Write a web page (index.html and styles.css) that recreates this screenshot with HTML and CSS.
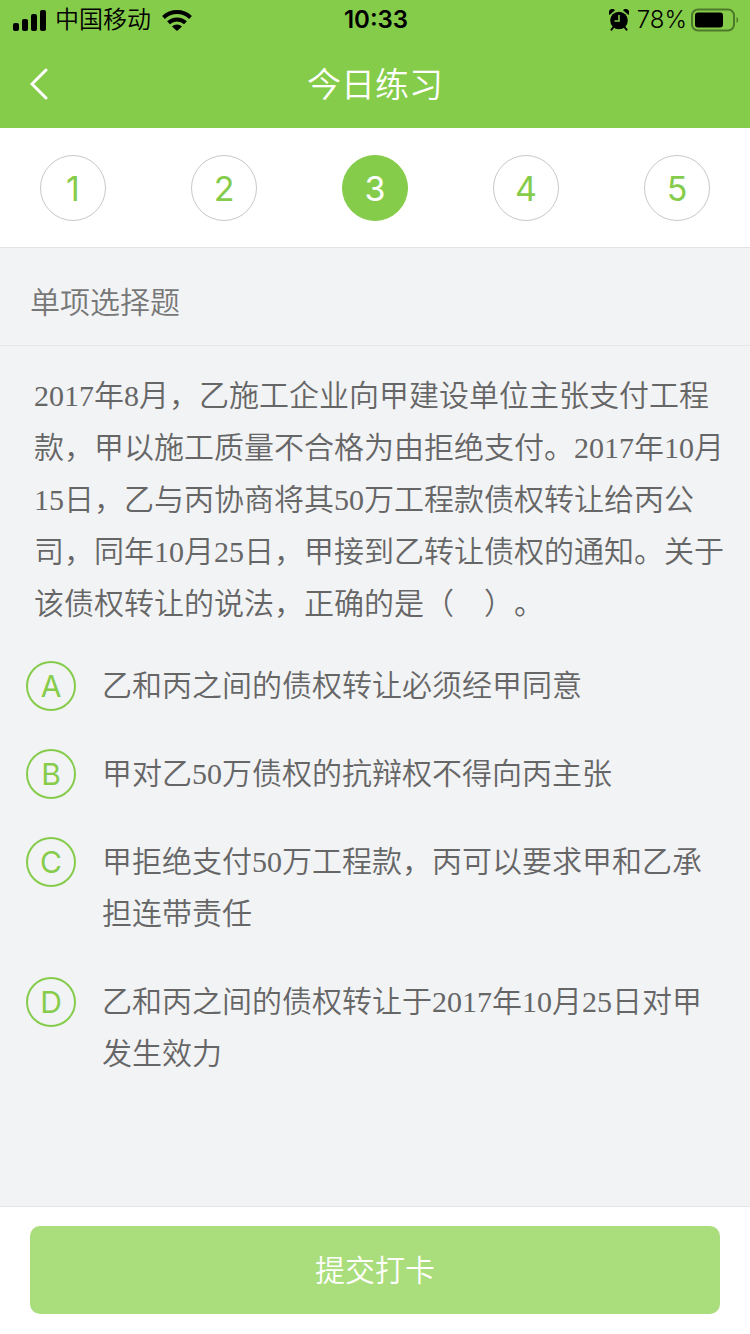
FILE: index.html
```
<!DOCTYPE html>
<html lang="zh-CN">
<head>
    <meta charset="UTF-8">
    <meta name="viewport" content="width=device-width, initial-scale=1">
    <title>今日练习</title>
    <link rel="stylesheet" href="styles.css">
</head>
<body>
    <header class="header">
        <div class="status-bar">
            <div class="status-left">
                <svg width="34" height="22" viewBox="0 0 34 22">
                    <rect x="0" y="14" width="6" height="8" rx="2"/>
                    <rect x="9" y="10" width="6" height="12" rx="2"/>
                    <rect x="18" y="5" width="6" height="17" rx="2"/>
                    <rect x="27" y="1" width="6" height="21" rx="2"/>
                </svg>
                <span>中国移动</span>
                <svg class="wifi" width="30" height="22" viewBox="0 0 30 22">
                    <g fill="none" stroke="#000" stroke-width="4">
                        <path d="M1.5 8.5a19.5 19.5 0 0 1 27 0"/>
                        <path d="M6.5 13.8a12.3 12.3 0 0 1 17 0"/>
                    </g>
                    <path d="M10 17.6a7.2 7.2 0 0 1 10 0L15 22z"/>
                </svg>
            </div>
            <span class="time">10:33</span>
            <div class="status-right">
                <svg width="20" height="22" viewBox="0 0 20 22">
                    <circle cx="10" cy="11.5" r="8.8"/>
                    <path d="M0.5 6A3.6 3.6 0 0 1 6 1.3zM19.5 6A3.6 3.6 0 0 0 14 1.3z"/>
                    <path d="M4.5 18l-2 2.6M15.5 18l2 2.6" stroke="#000" stroke-width="2" stroke-linecap="round"/>
                    <path d="M10 6v6H5.5" fill="none" stroke="#86cc4b" stroke-width="1.6"/>
                </svg>
                <span>78%</span>
                <svg class="battery" width="48" height="24" viewBox="0 0 48 24">
                    <rect x="1" y="1.5" width="42" height="21" rx="6" fill="none" stroke="#4d7a28" stroke-width="2"/>
                    <rect x="4" y="4.5" width="28" height="15" rx="3"/>
                    <path d="M45.5 9v6c2.2-1 2.2-5 0-6z" fill="#4d7a28"/>
                </svg>
            </div>
        </div>
        <div class="nav">
            <button class="back" type="button" aria-label="返回">
                <svg width="18" height="32" viewBox="0 0 18 32">
                    <path d="M16 2L2 16l14 14" fill="none" stroke="#fff" stroke-width="3" stroke-linecap="round"/>
                </svg>
            </button>
            <h1>今日练习</h1>
        </div>
    </header>

    <nav class="steps">
        <button class="step" type="button">1</button>
        <button class="step" type="button">2</button>
        <button class="step active" type="button">3</button>
        <button class="step" type="button">4</button>
        <button class="step" type="button">5</button>
    </nav>

    <main class="content">
        <h2 class="type">单项选择题</h2>
        <p class="question" id="question">2017年8月，乙施工企业向甲建设单位主张支付工程款，甲以施工质量不合格为由拒绝支付。2017年10月15日，乙与丙协商将其50万工程款债权转让给丙公司，同年10月25日，甲接到乙转让债权的通知。关于该债权转让的说法，正确的是（　）。</p>
        <div class="options" role="radiogroup" aria-labelledby="question">
            <label class="option">
                <input type="radio" name="answer" value="A">
                <span class="letter">A</span>
                <span class="text">乙和丙之间的债权转让必须经甲同意</span>
            </label>
            <label class="option">
                <input type="radio" name="answer" value="B">
                <span class="letter">B</span>
                <span class="text">甲对乙50万债权的抗辩权不得向丙主张</span>
            </label>
            <label class="option">
                <input type="radio" name="answer" value="C">
                <span class="letter">C</span>
                <span class="text">甲拒绝支付50万工程款，丙可以要求甲和乙承担连带责任</span>
            </label>
            <label class="option">
                <input type="radio" name="answer" value="D">
                <span class="letter">D</span>
                <span class="text">乙和丙之间的债权转让于2017年10月25日对甲发生效力</span>
            </label>
        </div>
    </main>

    <footer class="footer">
        <button class="submit" type="button">提交打卡</button>
    </footer>
</body>
</html>
```

FILE: styles.css
```
* {
    box-sizing: border-box;
}
body {
    margin: 0;
    min-height: 100vh;
    display: flex;
    flex-direction: column;
    background-color: #f2f3f5;
    color: #666;
    font-family: Inter, "Noto Sans CJK SC", sans-serif;
    font-weight: 350;
}
button {
    font-family: inherit;
    font-weight: inherit;
    padding: 0;
    border: none;
    cursor: pointer;
}
svg {
    display: block;
}

/* header */
.header {
    background-color: #86cc4b;
}
.status-bar {
    display: grid;
    grid-template-columns: 1fr auto 1fr;
    align-items: center;
    height: 40px;
    padding: 0 11px 0 13px;
    color: #000;
    font-size: 24px;
    line-height: 40px;
}
.status-left, .status-right {
    display: flex;
    align-items: center;
    gap: 8px;
}
.wifi {
    margin-left: 3px;
}
.status-right {
    justify-content: flex-end;
}
.battery {
    margin-left: -4px;
}
.time {
    font-weight: 600;
}
.nav {
    display: grid;
    grid-template-columns: 60px 1fr 60px;
    align-items: center;
    height: 88px;
}
.back {
    height: 88px;
    padding-left: 30px;
    background: none;
}
.nav h1 {
    margin: 0;
    padding-top: 2px;
    color: #fff;
    font-size: 34px;
    font-weight: 350;
    line-height: 44px;
    text-align: center;
}

/* question numbers */
.steps {
    display: flex;
    justify-content: space-between;
    padding: 27px 40px 26px;
    background-color: #fff;
    border-bottom: 1px solid #e3e3e3;
}
.step {
    width: 66px;
    height: 66px;
    border: 1px solid #c8c8c8;
    border-radius: 50%;
    background-color: #fff;
    color: #86cc4b;
    font-size: 34px;
    font-weight: 400;
}
.step.active {
    border-color: #86cc4b;
    background-color: #86cc4b;
    color: #fff;
}

/* question */
.content {
    flex: 1;
    font-size: 30px;
    line-height: 52px;
    text-spacing-trim: space-all;
}
.type {
    margin: 0;
    padding: 28px 30px 17px;
    border-bottom: 1px solid #e6e7e9;
    color: #777;
    font-size: 30px;
    font-weight: 350;
}
.question {
    margin: 0;
    padding: 24px 24px 30px 34px;
    font-family: "Liberation Serif", "Noto Sans CJK SC", serif;
}
.options {
    display: flex;
    flex-direction: column;
    gap: 36px;
    padding: 0 24px 36px 26px;
}
.option {
    display: flex;
    align-items: flex-start;
    gap: 26px;
    cursor: pointer;
}
.option input {
    position: absolute;
    opacity: 0;
}
.letter {
    flex: none;
    width: 50px;
    height: 50px;
    margin-top: 1px;
    border: 2px solid #86cc4b;
    border-radius: 50%;
    color: #86cc4b;
    font-weight: 400;
    line-height: 46px;
    text-align: center;
}
.option input:checked + .letter {
    background-color: #86cc4b;
    color: #fff;
}
.text {
    font-family: "Liberation Serif", "Noto Sans CJK SC", serif;
}

/* submit */
.footer {
    padding: 19px 30px 20px;
    background-color: #fff;
    border-top: 1px solid #e6e6ea;
}
.submit {
    display: block;
    width: 100%;
    height: 88px;
    border-radius: 10px;
    background-color: #aadd7b;
    color: #fff;
    font-size: 30px;
    line-height: 44px;
}
```
